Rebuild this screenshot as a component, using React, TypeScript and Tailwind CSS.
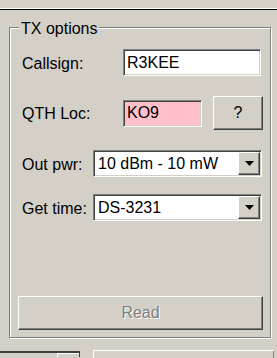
import React from "react";

const sunken =
  "border border-t-[#808080] border-l-[#808080] border-b-white border-r-white shadow-[inset_1px_1px_0_#404040,inset_-1px_-1px_0_#d4d0c8]";
const raised =
  "border border-t-white border-l-white border-b-[#404040] border-r-[#404040] shadow-[inset_-1px_-1px_0_#808080]";

const Combo = ({ value }: { value: string }) => (
  <div className={`flex h-[27px] w-[169px] items-center bg-white ${sunken}`}>
    <div className="flex-1 pl-[4px] text-[16px] leading-[18px] text-black">
      {value}
    </div>
    <div
      className={`mr-[1px] flex h-[23px] w-[22px] items-center justify-center bg-[#d4d0c8] ${raised}`}
    >
      <svg width="9" height="5" viewBox="0 0 9 5">
        <polygon points="0,0 9,0 4.5,5" fill="#000" />
      </svg>
    </div>
  </div>
);

export default function App() {
  return (
    <div
      className="flex h-[358px] w-[277px] flex-col overflow-hidden bg-[#d4d0c8]"
      style={{ fontFamily: '"Liberation Sans", Arial, sans-serif' }}
    >
      {/* top separator */}
      <div className="mt-[8px] h-px w-full bg-white" />
      <div className="h-px w-full bg-black" />

      {/* TX options group */}
      <div className="relative ml-[9px] mt-[17px] flex h-[313px] w-[262px] flex-col border border-[#808080] shadow-[inset_1px_1px_0_#fff,1px_1px_0_#fff]">
        <span className="absolute left-[9px] top-[-8px] bg-[#d4d0c8] px-[2px] text-[16px] leading-[18px] text-black">
          TX options
        </span>

        <div className="mt-[21px] flex h-[27px] items-center">
          <div className="ml-[12px] w-[101px] pt-[3px] text-[16px] leading-[18px] text-black">
            Callsign:
          </div>
          <div
            className={`flex h-[27px] w-[138px] items-center bg-white pl-[3px] text-[16px] leading-[18px] text-black ${sunken}`}
          >
            R3KEE
          </div>
        </div>

        <div className="mt-[20px] flex h-[34px] items-center">
          <div className="ml-[12px] w-[101px] pt-[2px] text-[16px] leading-[18px] text-black">
            QTH Loc:
          </div>
          <div
            className={`flex h-[27px] w-[79px] items-center bg-[#ffc0cb] pl-[3px] text-[16px] leading-[18px] text-black ${sunken}`}
          >
            KO9
          </div>
          <div
            className={`ml-[11px] flex h-[34px] w-[50px] items-center justify-center bg-[#d4d0c8] text-[16px] leading-[18px] text-black ${raised}`}
          >
            ?
          </div>
        </div>

        <div className="mt-[20px] flex h-[27px] items-center">
          <div className="ml-[12px] w-[71px] pt-[2px] text-[16px] leading-[18px] text-black">
            Out pwr:
          </div>
          <Combo value="10 dBm - 10 mW" />
        </div>

        <div className="mt-[17px] flex h-[27px] items-center">
          <div className="ml-[12px] w-[71px] pt-[2px] text-[16px] leading-[18px] text-black">
            Get time:
          </div>
          <Combo value="DS-3231" />
        </div>

        <div
          className={`ml-[8px] mt-[75px] flex h-[34px] w-[245px] items-center justify-center bg-[#d4d0c8] text-[16px] leading-[18px] text-[#808080] [text-shadow:1px_1px_0_#fff] ${raised}`}
        >
          Read
        </div>
      </div>

      {/* bottom strip */}
      <div className="mt-[12px] flex items-start">
        <div className="mt-[1px] flex h-[6px] w-[80px] justify-end border-t-2 border-t-[#404040] border-r border-r-[#404040]">
          <div className="h-[4px] w-[22px] border-l border-t border-white bg-[#d4d0c8]" />
        </div>
        <div className="ml-[13px] h-[8px] w-[181px] border-l border-t border-white shadow-[inset_-1px_0_0_#808080]" />
      </div>
    </div>
  );
}
